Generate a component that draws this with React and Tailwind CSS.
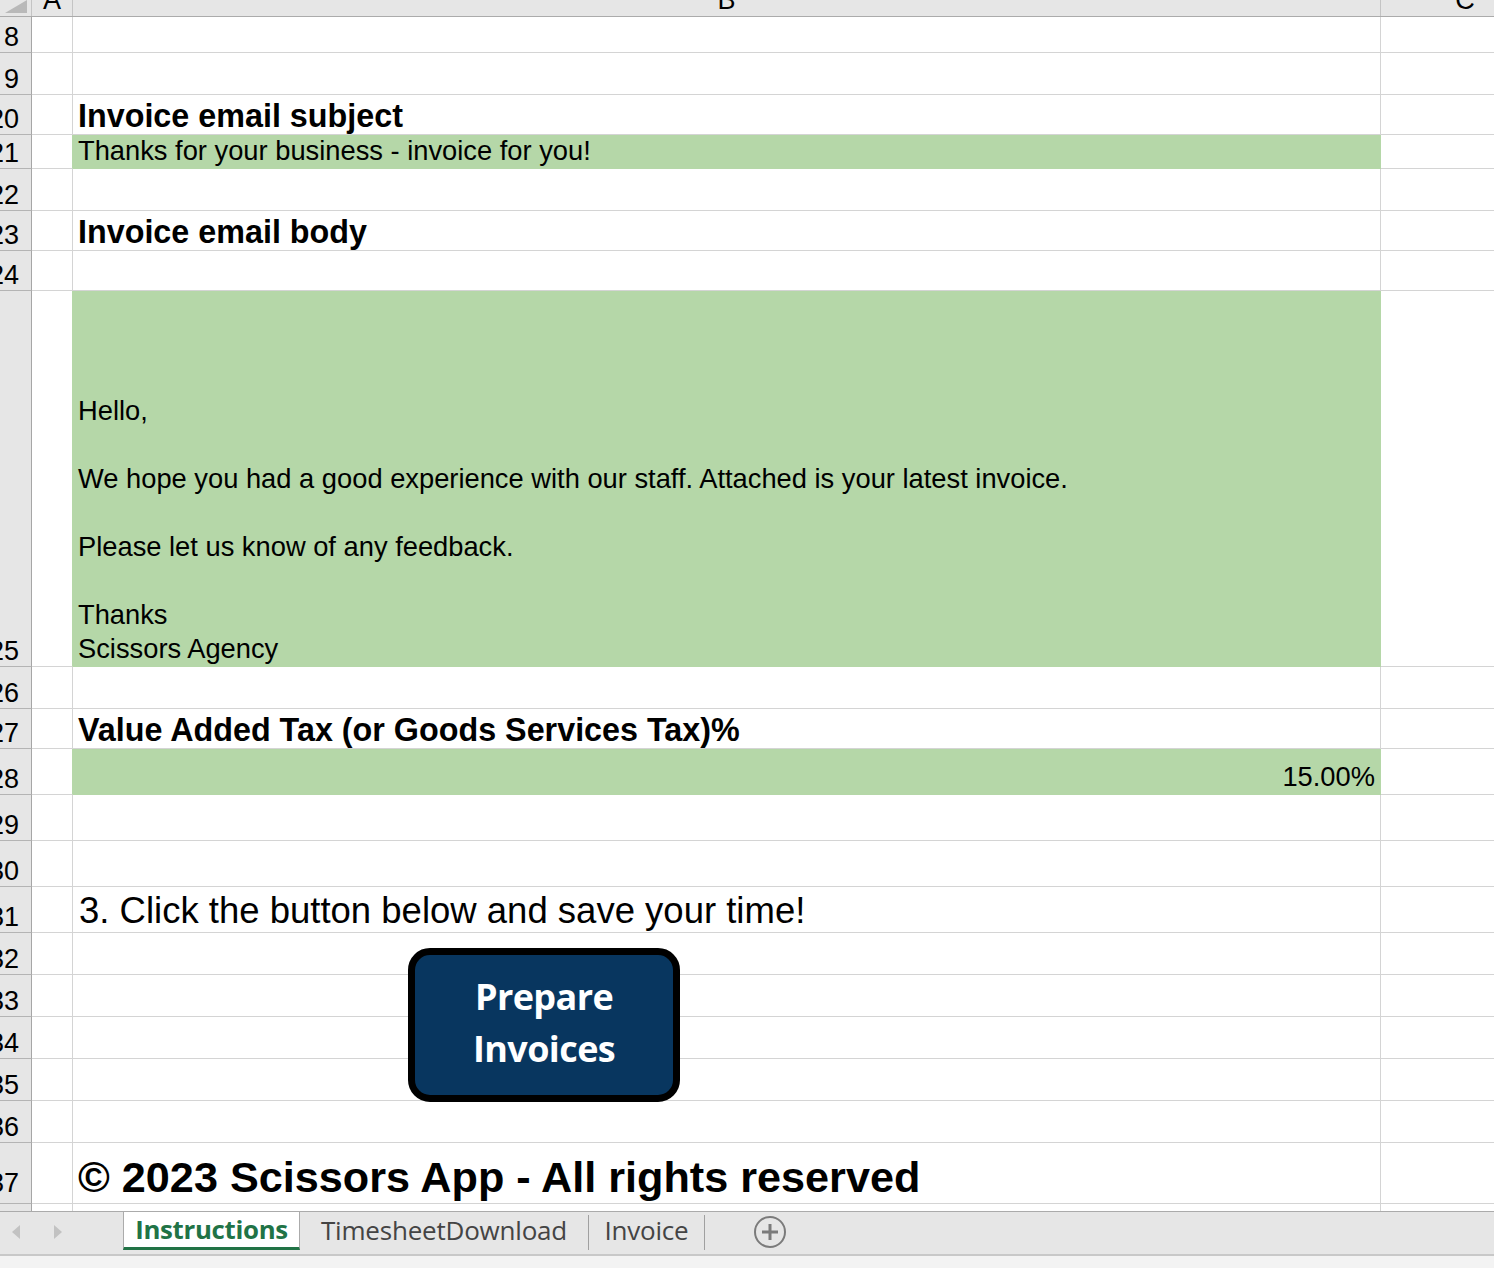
import React from 'react'

// Excel-like sheet view: row/column headers, grid rows, a floating macro button and sheet tabs.
const rows = [
  { n: '8', h: 36 },
  { n: '9', h: 42 },
  { n: '20', h: 40, text: 'Invoice email subject', cls: 'text-[32.3px] font-bold leading-[35px]' },
  { n: '21', h: 34, green: true, text: 'Thanks for your business - invoice for you!' },
  { n: '22', h: 42 },
  { n: '23', h: 40, text: 'Invoice email body', cls: 'text-[32.3px] font-bold leading-[35px]' },
  { n: '24', h: 40 },
  {
    n: '25',
    h: 376,
    green: true,
    text: 'Hello,\n\nWe hope you had a good experience with our staff. Attached is your latest invoice.\n\nPlease let us know of any feedback.\n\nThanks\nScissors Agency',
  },
  { n: '26', h: 42 },
  { n: '27', h: 40, text: 'Value Added Tax (or Goods Services Tax)%', cls: 'text-[32.3px] font-bold leading-[35px]' },
  { n: '28', h: 46, green: true, text: '15.00%', right: true },
  { n: '29', h: 46 },
  { n: '30', h: 46 },
  { n: '31', h: 46, text: '3. Click the button below and save your time!', cls: 'text-[36.5px] leading-[42px] pl-[1px]' },
  { n: '32', h: 42 },
  { n: '33', h: 42 },
  { n: '34', h: 42 },
  { n: '35', h: 42 },
  { n: '36', h: 42 },
  { n: '37', h: 61, numPb: 'pb-[6px]', text: '© 2023 Scissors App - All rights reserved', cls: 'text-[43.2px] font-bold leading-[50px] pb-[1px]' },
]

function Row({ n, h, green, text, cls, right, numPb }) {
  return (
    <div className="flex shrink-0" style={{ height: h }}>
      <div
        className={
          'w-[32px] shrink-0 bg-[#e6e6e6] border-r border-b border-r-[#a6a6a6] border-b-[#b4b4b4] overflow-hidden flex items-end justify-end pr-[12px] ' +
          (numPb || 'pb-[1px]')
        }
      >
        <span className="text-[27px] leading-none whitespace-nowrap text-black">{n}</span>
      </div>
      <div
        className={
          'w-[41px] shrink-0 border-b border-r border-b-[#d4d4d4] ' +
          (green ? 'border-r-[#b5d7a8]' : 'border-r-[#d4d4d4]')
        }
      />
      <div
        className={
          'w-[1308px] shrink-0 border-r border-b flex items-end overflow-visible ' +
          (green ? 'bg-[#b5d7a8] border-[#b5d7a8] ' : 'border-[#d4d4d4] ') +
          (right ? 'justify-end pr-[5px] ' : 'pl-[5px] ')
        }
      >
        {text && (
          <div className={'whitespace-pre-line text-black ' + (cls || 'text-[27.3px] leading-[34px]')}>{text}</div>
        )}
      </div>
      <div className="flex-1 border-b border-[#d4d4d4]" />
    </div>
  )
}

function TabArrow({ dir }) {
  return (
    <svg width="10" height="16" viewBox="0 0 10 16" className="shrink-0">
      {dir === 'left' ? (
        <polygon points="9,1 1,8 9,15" fill="#c2c2c2" />
      ) : (
        <polygon points="1,1 9,8 1,15" fill="#c2c2c2" />
      )}
    </svg>
  )
}

export default function App() {
  return (
    <div className="relative w-[1494px] h-[1268px] overflow-hidden bg-white flex flex-col font-['Liberation_Sans',Arial,sans-serif]">
      {/* column headers */}
      <div className="flex h-[17px] shrink-0 bg-[#e6e6e6] border-b border-[#ababab] overflow-hidden">
        <div className="w-[32px] shrink-0 border-r border-[#c4c4c4] relative">
          <svg width="28" height="14" viewBox="0 0 28 14" className="absolute left-0 top-0">
            <polygon points="27,0 27,13 5,13" fill="#b9b9b9" />
          </svg>
        </div>
        <div className="w-[41px] shrink-0 border-r border-[#c4c4c4] flex justify-center">
          <span className="text-[27px] leading-none mt-[-13px] text-black">A</span>
        </div>
        <div className="w-[1308px] shrink-0 border-r border-[#c4c4c4] flex justify-center">
          <span className="text-[27px] leading-none mt-[-13px] text-black">B</span>
        </div>
        <div className="flex-1">
          <div className="w-[168px] flex justify-center">
            <span className="text-[27px] leading-none mt-[-13px] text-black">C</span>
          </div>
        </div>
      </div>

      {/* grid rows */}
      <div className="flex flex-col h-[1194px] shrink-0 overflow-hidden">
        {rows.map(r => (
          <Row key={r.n} {...r} />
        ))}
        <div className="flex flex-1">
          <div className="w-[32px] shrink-0 bg-[#e6e6e6] border-r border-[#a6a6a6]" />
          <div className="w-[41px] shrink-0 border-r border-[#d4d4d4]" />
          <div className="w-[1308px] shrink-0 border-r border-[#d4d4d4]" />
          <div className="flex-1" />
        </div>
      </div>

      {/* sheet tabs */}
      <div className="h-[45px] shrink-0 bg-[#e6e6e6] border-t border-b-2 border-t-[#ababab] border-b-[#c8c8c8] flex items-stretch font-['Open_Sans','Noto_Sans',sans-serif]">
        <div className="w-[123px] shrink-0 flex items-center gap-[32px] pl-[11px] pb-[3px]">
          <TabArrow dir="left" />
          <TabArrow dir="right" />
        </div>
        <div className="w-[177px] shrink-0 bg-white border-x border-[#ababab] mb-[4px] flex items-center justify-center border-b-[3px] border-b-[#217346]">
          <span className="text-[25.8px] font-bold text-[#217346] leading-none tracking-[-0.3px]">Instructions</span>
        </div>
        <div className="w-[288px] shrink-0 flex items-center justify-center pb-[6px]">
          <span className="text-[26px] text-[#444] leading-none tracking-[-0.2px]">TimesheetDownload</span>
        </div>
        <div className="w-px my-[3px] mb-[4px] bg-[#a0a0a0]" />
        <div className="w-[115px] shrink-0 flex items-center justify-center pb-[6px]">
          <span className="text-[26px] text-[#444] leading-none tracking-[-0.2px]">Invoice</span>
        </div>
        <div className="w-px my-[3px] mb-[4px] bg-[#a0a0a0]" />
        <div className="w-[130px] shrink-0 flex items-center justify-center pb-[3px]">
          <svg width="34" height="34" viewBox="0 0 34 34">
            <circle cx="17" cy="17" r="15" fill="none" stroke="#7b7b7b" strokeWidth="2" />
            <path d="M17 9v16M9 17h16" stroke="#7b7b7b" strokeWidth="3" />
          </svg>
        </div>
      </div>

      {/* status bar */}
      <div className="flex-1 bg-[#f3f3f3]" />

      {/* macro button shape floating over the grid */}
      <div className="absolute left-[408px] top-[948px] w-[272px] h-[154px] rounded-[22px] border-[7px] border-black bg-[#08365f] flex items-center justify-center">
        <div className="text-white text-center font-bold text-[36px] leading-[52px] pb-[4px] font-['Open_Sans','Noto_Sans',sans-serif] tracking-[-0.6px]">
          Prepare
          <br />
          Invoices
        </div>
      </div>
    </div>
  )
}
